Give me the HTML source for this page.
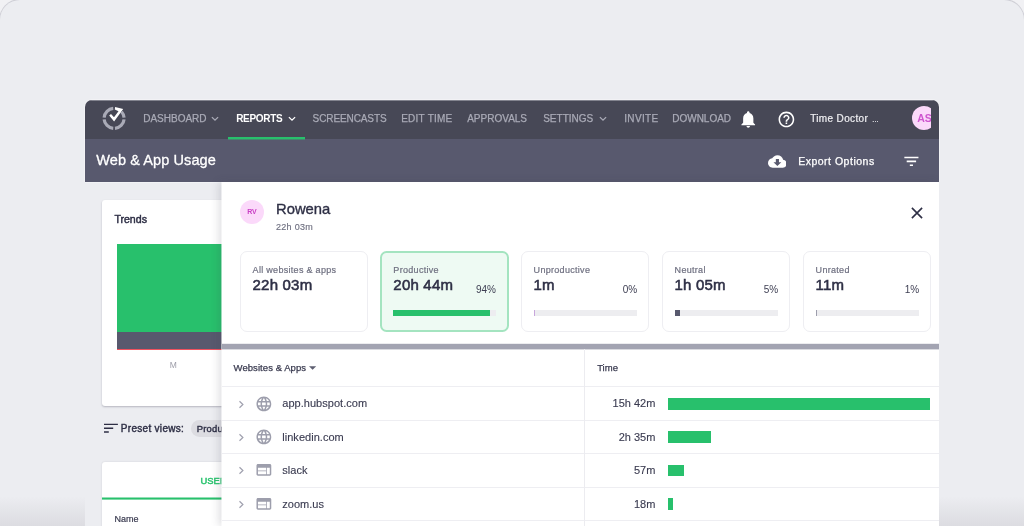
<!DOCTYPE html>
<html><head><meta charset="utf-8">
<style>
*{box-sizing:border-box;margin:0;padding:0}
html,body{width:1024px;height:526px;overflow:hidden;background:#f1f1f4;font-family:"Liberation Sans",sans-serif;}
#bg{position:absolute;left:0;top:0;width:1024px;height:526px;background:#ecedf1;border-radius:20px 20px 0 0;overflow:hidden;box-shadow:0 0 0 1px rgba(120,120,135,.28);will-change:transform;opacity:.999}
.a{position:absolute}
.t{position:absolute;white-space:nowrap;line-height:1}
#app{position:absolute;left:85.2px;top:100px;width:853.5px;height:426px;background:#ecedf1;border-radius:7px 7px 0 0;overflow:hidden}
#nav{position:absolute;left:0;top:0;width:854px;height:39px;background:#474856}
#sub{position:absolute;left:0;top:39px;width:854px;height:43px;background:#58596e}
.ni{position:absolute;top:14px;font-size:10px;color:#a9aab6;letter-spacing:0px;white-space:nowrap;line-height:10px;-webkit-text-stroke:.25px #a9aab6}
#panel{position:absolute;left:136.6px;top:82px;width:717.2px;height:344px;background:#fff;box-shadow:-3px 0 8px rgba(60,60,80,.17)}
.card{position:absolute;top:69px;width:128px;height:81px;border:1.4px solid #eeeef2;border-radius:7px;background:#fff}
.card .l{position:absolute;left:12px;top:13px;font-size:9px;color:#6f7081;white-space:nowrap;line-height:10px;letter-spacing:.3px;-webkit-text-stroke:.2px #6f7081}
.card .v{position:absolute;left:12px;top:25.4px;font-size:15px;color:#2e2f45;white-space:nowrap;line-height:16px;letter-spacing:.2px;-webkit-text-stroke:.55px #2e2f45}
.card .p{position:absolute;right:11px;top:33px;font-size:10px;color:#3d3e52;white-space:nowrap;line-height:10px}
.card .b{position:absolute;left:12px;top:57.5px;width:103px;height:6px;background:#ededf0}
.card .b i{position:absolute;left:0;top:0;height:6px;display:block}
.card.g .l,.card.g .v{left:11.4px;margin-top:-.8px;margin-left:0}.card.g .v{margin-top:-1.4px}.card.g .b{left:11px;margin-top:-.8px;margin-left:0}.card.g .p{margin-top:-.8px;right:10.6px;margin-right:0}.card .l,.card .v,.card .b{margin-left:-.4px;margin-top:0}.card .b{margin-top:.3px}.card .p{margin-right:-.2px;margin-top:-.4px}
.row{position:absolute;left:0;width:717px;height:33px;border-top:1px solid #eeeef2}
.ic{position:absolute}
.row .n{position:absolute;left:60.3px;top:10px;font-size:11px;color:#3a3b50;-webkit-text-stroke:.12px #3a3b50;letter-spacing:.03px;line-height:12px;white-space:nowrap}
.row .tm{position:absolute;right:283.6px;top:10px;font-size:11px;color:#3a3b50;-webkit-text-stroke:.12px #3a3b50;line-height:12px;white-space:nowrap}
.row .bar{position:absolute;left:445.9px;top:10.4px;height:11.8px;background:#28c06c}
</style></head><body>
<div id="bg">
<div class="a" style="left:0;top:496px;width:85px;height:30px;background:linear-gradient(#ecedf1,#dcdce1)"></div>
<div class="a" style="left:939px;top:496px;width:85px;height:30px;background:linear-gradient(#ecedf1,#dcdce1)"></div>
<div class="a" style="left:84.2px;top:99px;width:855.5px;height:83px;border-radius:8px 8px 0 0;background:rgba(255,255,255,.3)"></div>
<div id="app">
 <div id="nav">
  <div class="a" style="left:5px;width:843px;top:0;height:1px;background:#83848f"></div>
  <svg class="a" style="left:16px;top:5px" width="28" height="28" viewBox="0 0 28 28">
   <g fill="none" stroke="#a9aab6" stroke-width="3.2">
    <path d="M12.23 3.44 A10 10 0 0 0 3.14 12.53"/>
    <path d="M3.14 14.27 A10 10 0 0 0 12.23 23.36"/>
    <path d="M13.97 23.36 A10 10 0 0 0 23.06 14.27"/>
    <path d="M23.06 12.53 A10 10 0 0 0 20.53 6.71"/>
   </g>
   <path d="M8.2 10.6 L13.1 16.6 L22.2 4.0 L14.1 2.0 L13.8 4.6 L17.5 6.2 L13.0 12.3 L10.0 8.9 Z" fill="#fff"/>
  </svg>
  <svg class="a" style="left:126px;top:16px" width="8" height="6" viewBox="0 0 8 6"><path d="M0.9 1.1 L4 4.2 L7.1 1.1" fill="none" stroke="#a9aab6" stroke-width="1.3"/></svg><svg class="a" style="left:202.5px;top:16px" width="8" height="6" viewBox="0 0 8 6"><path d="M0.9 1.1 L4 4.2 L7.1 1.1" fill="none" stroke="#fff" stroke-width="1.3"/></svg><svg class="a" style="left:513.7px;top:16px" width="8" height="6" viewBox="0 0 8 6"><path d="M0.9 1.1 L4 4.2 L7.1 1.1" fill="none" stroke="#a9aab6" stroke-width="1.3"/></svg>
  <svg class="a" style="left:652.9px;top:8.5px" width="20.5" height="20.5" viewBox="0 0 24 24"><path fill="#fff" d="M12 22c1.1 0 2-.9 2-2h-4c0 1.1.89 2 2 2zm6-6v-5c0-3.07-1.64-5.64-4.5-6.32V4c0-.83-.67-1.5-1.5-1.5s-1.5.67-1.5 1.5v.68C7.63 5.36 6 7.92 6 11v5l-2 2v1h16v-1l-2-2z"/></svg>
  <svg class="a" style="left:692.2px;top:9.7px" width="18.8" height="18.8" viewBox="0 0 24 24"><path fill="#fff" d="M11 18h2v-2h-2v2zm1-16C6.48 2 2 6.48 2 12s4.48 10 10 10 10-4.48 10-10S17.52 2 12 2zm0 18c-4.41 0-8-3.59-8-8s3.59-8 8-8 8 3.59 8 8-3.59 8-8 8zm0-14c-2.210 0-4 1.790-4 4h2c0-1.100.900-2 2-2s2 .900 2 2c0 2-3 1.750-3 5h2c0-2.250 3-2.500 3-5 0-2.210-1.790-4-4-4z"/></svg>
  <div class="ni" style="left:58px">DASHBOARD</div>
  <div class="ni" style="left:151px;color:#fff;font-weight:bold;letter-spacing:-0.3px;-webkit-text-stroke:0">REPORTS</div>
  <div class="a" style="left:143px;top:37px;width:77px;height:3px;z-index:2;background:linear-gradient(#28c06c 0 2px,rgba(40,192,108,.45) 2px 3px)"></div>
  <div class="ni" style="left:227.4px;letter-spacing:-0.1px">SCREENCASTS</div>
  <div class="ni" style="left:316px;letter-spacing:.25px">EDIT TIME</div>
  <div class="ni" style="left:382px">APPROVALS</div>
  <div class="ni" style="left:458px">SETTINGS</div>
  <div class="ni" style="left:539px;letter-spacing:.35px">INVITE</div>
  <div class="ni" style="left:587px">DOWNLOAD</div>
  <div class="ni" style="left:725px;color:#f0f0f3;letter-spacing:.35px;-webkit-text-stroke:.2px #f0f0f3">Time Doctor <span style="font-size:7.5px;letter-spacing:.1px;margin-left:1px">...</span></div>
  <div class="a" style="left:827px;top:6px;width:19px;height:24px;overflow:hidden"><div style="width:24px;height:24px;border-radius:12px;background:#fbd9fa;color:#cf55cf;font-size:10.5px;font-weight:bold;line-height:24px;padding-left:5px">AS</div></div>
 </div>
 <div id="sub">
  <div class="t" style="left:11px;top:13.4px;font-size:14.5px;color:#fff;line-height:16px;letter-spacing:.1px;-webkit-text-stroke:.3px #fff">Web &amp; App Usage</div>
  <svg class="a" style="left:682.4px;top:12.8px" width="18.8" height="18.8" viewBox="0 0 24 24"><path fill="#fff" d="M19.35 10.04C18.67 6.59 15.64 4 12 4 9.11 4 6.6 5.64 5.35 8.04 2.34 8.36 0 10.91 0 14c0 3.31 2.69 6 6 6h13c2.76 0 5-2.24 5-5 0-2.64-2.05-4.78-4.65-4.96zM17 13l-5 5-5-5h3V9h4v4h3z"/></svg>
  <svg class="a" style="left:816.9px;top:13.2px" width="18.8" height="18.8" viewBox="0 0 24 24"><path fill="#fff" d="M10 18h4v-2h-4v2zM3 6v2h18V6H3zm3 7h12v-2H6v2z"/></svg>
  <div class="t" style="left:713px;top:16px;font-size:10.5px;color:#fff;line-height:12px;letter-spacing:.5px;-webkit-text-stroke:.25px #fff">Export Options</div>
 </div>
 <div class="a" style="left:0;top:82px;width:137px;height:1px;background:rgba(255,255,255,.35)"></div>
 <!-- left content -->
 <div class="a" style="left:17px;top:100px;width:220px;height:206.2px;background:#fff;border-radius:3px;box-shadow:0 1px 2px rgba(40,40,60,.28)">
  <div class="t" style="left:12.2px;top:12.7px;font-size:10.6px;color:#2e2f45;line-height:12px;-webkit-text-stroke:.45px #2e2f45">Trends</div>
  <div class="a" style="left:14.8px;top:44px;width:205px;height:87.8px;background:#28c06c"></div>
  <div class="a" style="left:14.8px;top:131.8px;width:205px;height:16.8px;background:#58596e"></div>
  <div class="a" style="left:14.8px;top:148.6px;width:205px;height:1.4px;background:#f0525f"></div>
  <div class="t" style="left:67.5px;top:160.3px;font-size:8.5px;color:#9c9ca8;line-height:10px">M</div>
 </div>
 <svg class="a" style="left:19px;top:323px" width="15" height="11" viewBox="0 0 15 11"><path d="M0 1.4H13.9M0 5.2H9.2M0 9H4.8" stroke="#2e2f45" stroke-width="1.4" fill="none"/></svg>
 <div class="t" style="left:35.6px;top:322.6px;font-size:10px;color:#2e2f45;line-height:12px;letter-spacing:.3px;-webkit-text-stroke:.4px #2e2f45">Preset views:</div>
 <div class="a" style="left:106px;top:319.6px;width:80px;height:17.1px;border-radius:8.6px;background:#dcdce1"></div>
 <div class="t" style="left:111.6px;top:323.6px;font-size:9.4px;color:#2e2f45;line-height:10px;letter-spacing:.2px;-webkit-text-stroke:.4px #2e2f45">Productive</div>
 <div class="a" style="left:17px;top:362px;width:220px;height:70px;background:#fff;border-radius:3px;box-shadow:0 0 2px rgba(40,40,60,.15)">
  <div class="t" style="left:98.2px;top:14.2px;font-size:9.4px;color:#2cc470;line-height:10px;letter-spacing:.1px;-webkit-text-stroke:.5px #2cc470">USERS</div>
  <div class="a" style="left:0;top:35px;width:220px;height:3px;background:linear-gradient(rgba(40,192,108,.5) 0 1px,#28c06c 1px 2px,rgba(40,192,108,.6) 2px 3px)"></div>
  <div class="t" style="left:12.4px;top:51.5px;font-size:9px;color:#3a3b50;line-height:10px;-webkit-text-stroke:.2px #3a3b50">Name</div>
 </div>
 <div id="panel">
  <div class="a" style="left:-1px;top:0;width:1px;height:344px;background:rgba(255,255,255,.55)"></div>
  <div class="a" style="left:.2px;top:0;width:717px;height:344px">
  <div class="a" style="left:18px;top:18px;width:24px;height:24px;border-radius:12px;background:#fbd9fa;color:#c93fc4;font-size:7px;font-weight:bold;line-height:24px;text-align:center">RV</div>
  <div class="t" style="left:54px;top:19px;font-size:14.8px;color:#2e2f45;line-height:16px;-webkit-text-stroke:.35px #2e2f45">Rowena</div>
  <div class="t" style="left:54px;top:40.3px;font-size:9px;color:#6f7081;line-height:10px;letter-spacing:.3px;-webkit-text-stroke:.15px #6f7081">22h 03m</div>
  <svg class="a" style="left:689.5px;top:25px" width="12" height="12" viewBox="0 0 12 12"><path d="M0.9 0.9 L11.1 11.1 M11.1 0.9 L0.9 11.1" stroke="#2e2f45" stroke-width="1.6" fill="none"/></svg>
  <div class="card" style="left:18px"><div class="l">All websites &amp; apps</div><div class="v">22h 03m</div></div>
  <div class="card g" style="left:158px;background:#eefaf3;border:2px solid #a4e4c0;width:128.6px;border-radius:6.5px"><div class="l">Productive</div><div class="v">20h 44m</div><div class="p">94%</div><div class="b"><i style="width:97px;background:#28c06c"></i></div></div>
  <div class="card" style="left:299px"><div class="l">Unproductive</div><div class="v">1m</div><div class="p">0%</div><div class="b"><i style="width:.6px;background:#c8a6dc"></i></div></div>
  <div class="card" style="left:440px"><div class="l">Neutral</div><div class="v">1h 05m</div><div class="p">5%</div><div class="b"><i style="width:5px;background:#58596e"></i></div></div>
  <div class="card" style="left:581px"><div class="l">Unrated</div><div class="v">11m</div><div class="p">1%</div><div class="b"><i style="width:.7px;background:#9d9eac"></i></div></div>
  <div class="a" style="left:-.2px;top:161px;width:717.2px;height:7px;background:linear-gradient(rgba(163,164,178,.2) 0 1px,#a3a4b2 1px 6px,rgba(163,164,178,.4) 6px 7px)"></div>
  <div class="t" style="left:11.6px;top:180.7px;font-size:9.5px;color:#3a3b50;line-height:10px;letter-spacing:.06px;-webkit-text-stroke:.25px #3a3b50">Websites &amp; Apps</div>
  <svg class="a" style="left:87.5px;top:183.7px" width="7.2" height="4" viewBox="0 0 10 5"><path d="M0 0h10L5 5z" fill="#5d5e70"/></svg>
  <div class="t" style="left:375.2px;top:180.7px;font-size:9.5px;color:#3a3b50;line-height:10px;-webkit-text-stroke:.25px #3a3b50">Time</div>
  <div class="row" style="top:204.4px"><svg class="ic" style="left:16.5px;top:12.3px" width="6" height="9" viewBox="0 0 6 9"><path d="M1.5 1.2 L4.9 4.5 L1.5 7.8" fill="none" stroke="#a0a1af" stroke-width="1.2"/></svg><svg class="ic" style="left:33.1px;top:7.2px" width="17.76" height="17.76" viewBox="0 0 24 24"><path fill="#9d9eac" d="M11.99 2C6.47 2 2 6.48 2 12s4.47 10 9.99 10C17.52 22 22 17.52 22 12S17.52 2 11.99 2zm6.93 6h-2.95c-.32-1.25-.78-2.45-1.38-3.56 1.84.63 3.37 1.91 4.33 3.56zM12 4.04c.83 1.2 1.48 2.53 1.91 3.96h-3.82c.43-1.43 1.08-2.76 1.91-3.96zM4.26 14C4.1 13.36 4 12.69 4 12s.1-1.36.26-2h3.38c-.08.66-.14 1.32-.14 2 0 .68.06 1.34.14 2H4.26zm.82 2h2.95c.32 1.25.78 2.45 1.38 3.56-1.84-.63-3.37-1.9-4.33-3.56zm2.95-8H5.08c.96-1.66 2.49-2.93 4.33-3.56C8.81 5.55 8.35 6.75 8.03 8zM12 19.96c-.83-1.2-1.48-2.53-1.91-3.96h3.82c-.43 1.43-1.08 2.76-1.91 3.96zM14.34 14H9.66c-.09-.66-.16-1.32-.16-2 0-.68.07-1.35.16-2h4.68c.09.65.16 1.32.16 2 0 .68-.07 1.34-.16 2zm.25 5.56c.6-1.11 1.06-2.31 1.38-3.56h2.95c-.96 1.65-2.49 2.93-4.33 3.56zM16.36 14c.08-.66.14-1.32.14-2 0-.68-.06-1.34-.14-2h3.38c.16.64.26 1.31.26 2s-.1 1.36-.26 2h-3.38z"/></svg><div class="n">app.hubspot.com</div><div class="tm">15h 42m</div><div class="bar" style="width:262px"></div></div>
  <div class="row" style="top:237.8px"><svg class="ic" style="left:16.5px;top:12.3px" width="6" height="9" viewBox="0 0 6 9"><path d="M1.5 1.2 L4.9 4.5 L1.5 7.8" fill="none" stroke="#a0a1af" stroke-width="1.2"/></svg><svg class="ic" style="left:33.1px;top:7.2px" width="17.76" height="17.76" viewBox="0 0 24 24"><path fill="#9d9eac" d="M11.99 2C6.47 2 2 6.48 2 12s4.47 10 9.99 10C17.52 22 22 17.52 22 12S17.52 2 11.99 2zm6.93 6h-2.95c-.32-1.25-.78-2.45-1.38-3.56 1.84.63 3.37 1.91 4.33 3.56zM12 4.04c.83 1.2 1.48 2.53 1.91 3.96h-3.82c.43-1.43 1.08-2.76 1.91-3.96zM4.26 14C4.1 13.36 4 12.69 4 12s.1-1.36.26-2h3.38c-.08.66-.14 1.32-.14 2 0 .68.06 1.34.14 2H4.26zm.82 2h2.95c.32 1.25.78 2.45 1.38 3.56-1.84-.63-3.37-1.9-4.33-3.56zm2.95-8H5.08c.96-1.66 2.49-2.93 4.33-3.56C8.81 5.55 8.35 6.75 8.03 8zM12 19.96c-.83-1.2-1.48-2.53-1.91-3.96h3.82c-.43 1.43-1.08 2.76-1.91 3.96zM14.34 14H9.66c-.09-.66-.16-1.32-.16-2 0-.68.07-1.35.16-2h4.68c.09.65.16 1.32.16 2 0 .68-.07 1.34-.16 2zm.25 5.56c.6-1.11 1.06-2.31 1.38-3.56h2.95c-.96 1.65-2.49 2.93-4.33 3.56zM16.36 14c.08-.66.14-1.32.14-2 0-.68-.06-1.34-.14-2h3.38c.16.64.26 1.31.26 2s-.1 1.36-.26 2h-3.38z"/></svg><div class="n">linkedin.com</div><div class="tm">2h 35m</div><div class="bar" style="width:43.1px"></div></div>
  <div class="row" style="top:271.2px"><svg class="ic" style="left:16.5px;top:12.3px" width="6" height="9" viewBox="0 0 6 9"><path d="M1.5 1.2 L4.9 4.5 L1.5 7.8" fill="none" stroke="#a0a1af" stroke-width="1.2"/></svg><svg class="ic" style="left:32.8px;top:7.1px" width="17.76" height="17.76" viewBox="0 0 24 24"><path fill="#9d9eac" d="M20 4H4c-1.1 0-1.990.900-1.990 2L2 18c0 1.100.900 2 2 2h16c1.100 0 2-.900 2-2V6c0-1.100-.900-2-2-2zm-5 14H4v-4h11v4zm0-5H4V9h11v4zm5 5h-4V9h4v9z"/></svg><div class="n">slack</div><div class="tm">57m</div><div class="bar" style="width:16px"></div></div>
  <div class="row" style="top:304.6px"><svg class="ic" style="left:16.5px;top:12.3px" width="6" height="9" viewBox="0 0 6 9"><path d="M1.5 1.2 L4.9 4.5 L1.5 7.8" fill="none" stroke="#a0a1af" stroke-width="1.2"/></svg><svg class="ic" style="left:32.8px;top:7.1px" width="17.76" height="17.76" viewBox="0 0 24 24"><path fill="#9d9eac" d="M20 4H4c-1.1 0-1.990.900-1.990 2L2 18c0 1.100.900 2 2 2h16c1.100 0 2-.900 2-2V6c0-1.100-.900-2-2-2zm-5 14H4v-4h11v4zm0-5H4V9h11v4zm5 5h-4V9h4v9z"/></svg><div class="n">zoom.us</div><div class="tm">18m</div><div class="bar" style="width:5.4px"></div></div>
  <div class="row" style="top:338.0px"></div>
  <div class="a" style="left:362px;top:167.4px;width:1px;height:177px;background:#ececf0"></div>
 </div>
 </div>
</div>
</div>
</body></html>
